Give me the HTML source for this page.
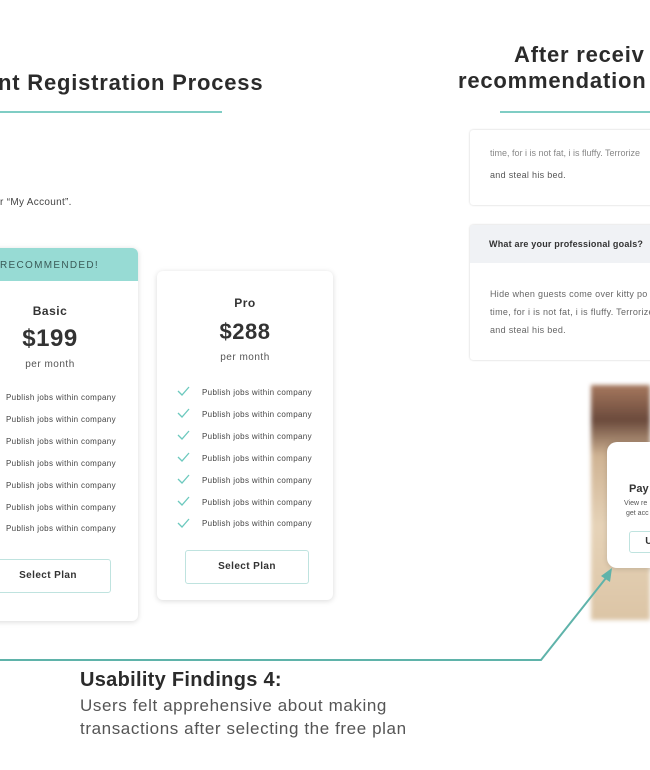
<!DOCTYPE html>
<html><head><meta charset="utf-8"><style>
*{margin:0;padding:0;box-sizing:border-box}
body{width:650px;height:770px;overflow:hidden;background:#fff;font-family:"Liberation Sans",sans-serif;color:#333;position:relative}
.a{position:absolute;white-space:nowrap}
.card{position:absolute;background:#fff;border-radius:6px;box-shadow:0 1px 6px rgba(0,0,0,.15)}
.feat{position:absolute;font-size:8px;color:#444;letter-spacing:.35px}
.btn{position:absolute;border:1px solid #bfe3df;border-radius:3px;font-size:10px;font-weight:bold;text-align:center;color:#333;letter-spacing:.4px}
</style></head><body>
<div class="a" style="left:-2px;top:70px;font-size:22px;font-weight:bold;color:#2b2b2b;letter-spacing:.8px">nt Registration Process</div>
<div class="a" style="left:0;top:111px;width:222px;height:2px;background:#7fcdc4"></div>
<div class="a" style="left:514px;top:42px;font-size:22px;font-weight:bold;color:#2b2b2b;letter-spacing:.8px">After receiv</div>
<div class="a" style="left:458px;top:68px;font-size:22px;font-weight:bold;color:#2b2b2b;letter-spacing:.8px">recommendation</div>
<div class="a" style="left:500px;top:111px;width:150px;height:2px;background:#7fcdc4"></div>
<div class="a" style="left:0;top:197px;font-size:10px;color:#444;letter-spacing:.3px">r “My Account”.</div>

<div class="card" style="left:-10px;top:248px;width:148px;height:373px;overflow:hidden">
<div style="height:33px;background:#97dbd4;font-size:10px;letter-spacing:1.3px;color:#3a5a57;padding:12px 0 0 10px">RECOMMENDED!</div>
<div class="a" style="left:0;width:120px;top:56px;text-align:center;font-size:12px;font-weight:bold;letter-spacing:.5px">Basic</div>
<div class="a" style="left:0;width:120px;top:77px;text-align:center;font-size:24px;font-weight:bold;letter-spacing:.5px">$199</div>
<div class="a" style="left:0;width:120px;top:111px;text-align:center;font-size:10px;color:#555;letter-spacing:.5px">per month</div>
<div class="feat" style="left:16px;top:145px">Publish jobs within company</div>
<div class="feat" style="left:16px;top:167px">Publish jobs within company</div>
<div class="feat" style="left:16px;top:189px">Publish jobs within company</div>
<div class="feat" style="left:16px;top:211px">Publish jobs within company</div>
<div class="feat" style="left:16px;top:233px">Publish jobs within company</div>
<div class="feat" style="left:16px;top:255px">Publish jobs within company</div>
<div class="feat" style="left:16px;top:276px">Publish jobs within company</div>
<div class="btn" style="left:-5px;top:311px;width:126px;height:34px;line-height:32px">Select Plan</div>
</div>

<div class="card" style="left:157px;top:271px;width:176px;height:329px">
<div class="a" style="left:0;width:176px;top:25px;text-align:center;font-size:12px;font-weight:bold;letter-spacing:.5px">Pro</div>
<div class="a" style="left:0;width:176px;top:48px;text-align:center;font-size:22px;font-weight:bold;letter-spacing:.5px">$288</div>
<div class="a" style="left:0;width:176px;top:81px;text-align:center;font-size:10px;color:#555;letter-spacing:.5px">per month</div>
<svg class="a" style="left:19px;top:113px" width="16" height="150" fill="none" stroke="#6cc9be" stroke-width="1.3">
<path d="M2 7l4 4 7-8M2 29l4 4 7-8M2 51l4 4 7-8M2 73l4 4 7-8M2 95l4 4 7-8M2 117l4 4 7-8M2 139l4 4 7-8"/></svg>
<div class="feat" style="left:45px;top:117px">Publish jobs within company</div>
<div class="feat" style="left:45px;top:139px">Publish jobs within company</div>
<div class="feat" style="left:45px;top:161px">Publish jobs within company</div>
<div class="feat" style="left:45px;top:183px">Publish jobs within company</div>
<div class="feat" style="left:45px;top:205px">Publish jobs within company</div>
<div class="feat" style="left:45px;top:227px">Publish jobs within company</div>
<div class="feat" style="left:45px;top:248px">Publish jobs within company</div>
<div class="btn" style="left:28px;top:279px;width:124px;height:34px;line-height:32px">Select Plan</div>
</div>

<div class="card" style="left:470px;top:130px;width:200px;height:75px;border-radius:3px;box-shadow:0 0 2px rgba(0,0,0,.2);overflow:hidden">
<div class="a" style="left:20px;top:18px;font-size:9px;color:#888">time, for i is not fat, i is fluffy. Terrorize</div>
<div class="a" style="left:20px;top:40px;font-size:9px;color:#555;letter-spacing:.3px">and steal his bed.</div>
</div>
<div class="card" style="left:470px;top:225px;width:200px;height:135px;border-radius:3px;box-shadow:0 0 2px rgba(0,0,0,.2);overflow:hidden">
<div style="height:38px;background:#f0f2f5;font-size:9px;font-weight:bold;padding:14px 0 0 19px;color:#333;letter-spacing:.2px">What are your professional goals?</div>
<div class="a" style="left:20px;top:64px;font-size:9px;color:#666;letter-spacing:.3px">Hide when guests come over kitty po</div>
<div class="a" style="left:20px;top:82px;font-size:9px;color:#666;letter-spacing:.3px">time, for i is not fat, i is fluffy. Terrorize</div>
<div class="a" style="left:20px;top:100px;font-size:9px;color:#666;letter-spacing:.3px">and steal his bed.</div>
</div>
<div class="a" style="left:591px;top:385px;width:59px;height:235px;background:linear-gradient(180deg,#a6785e 0%,#6b4a3c 15%,#cfb393 30%,#e6d3b8 60%,#dcc5a6 100%);filter:blur(2px)"></div>
<div class="card" style="left:607px;top:442px;width:60px;height:126px;border-radius:10px">
<div class="a" style="left:22px;top:41px;font-size:11px;font-weight:bold">Pay</div>
<div class="a" style="left:17px;top:58px;font-size:7px;color:#555">View re</div>
<div class="a" style="left:19px;top:68px;font-size:7px;color:#555">get acc</div>
<div class="btn" style="left:22px;top:89px;width:40px;height:22px;line-height:20px">U</div>
</div>

<svg class="a" style="left:0;top:0" width="650" height="770" fill="none">
<path d="M0 660H541L606 578" stroke="#5fb3aa" stroke-width="2"/>
<path d="M612 568l-2 14-9-6z" fill="#5fb3aa"/>
</svg>

<div class="a" style="left:80px;top:669px;font-size:20px;font-weight:bold;color:#2b2b2b;letter-spacing:.3px">Usability Findings 4:</div>
<div class="a" style="left:80px;top:696px;font-size:17px;color:#555;letter-spacing:.6px">Users felt apprehensive about making</div>
<div class="a" style="left:80px;top:719px;font-size:17px;color:#555;letter-spacing:.6px">transactions after selecting the free plan</div>
</body></html>
